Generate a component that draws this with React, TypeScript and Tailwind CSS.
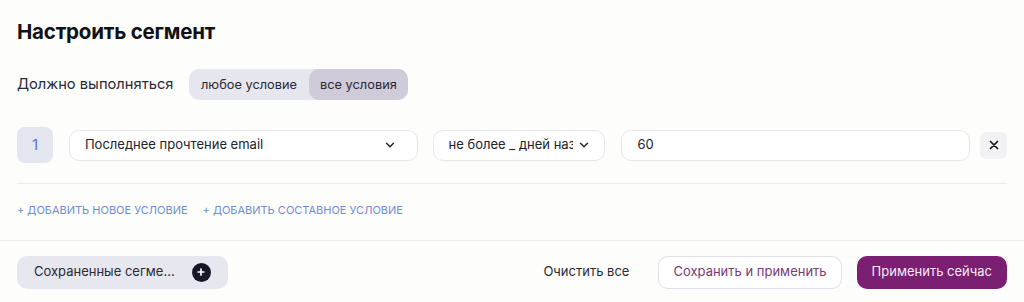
import React from "react";

function Chevron() {
  return (
    <svg width="14" height="14" viewBox="0 0 24 24" fill="none" stroke="#1f1f2a" strokeWidth="2.4" strokeLinecap="round" strokeLinejoin="round">
      <path d="M6 9l6 6 6-6" />
    </svg>
  );
}

export default function App() {
  return (
    <div className="w-[1024px] h-[302px] bg-[#fdfdfb] text-[#1c1c24] overflow-hidden" style={{ fontFamily: "Inter, 'Noto Sans', sans-serif" }}>
      <div className="px-[17px] pt-[19px]">
        <h1 className="text-[20.5px] leading-[26px] font-bold text-[#111117] tracking-[-0.2px]">Настроить сегмент</h1>
        <div className="flex items-center mt-[24px] h-[31px]">
          <span className="text-[14.7px] text-[#2a2a33] w-[172px]">Должно выполняться</span>
          <div className="flex h-[31px] rounded-[10px] bg-[#e6e6ef] text-[12.8px] text-[#2a2a33]">
            <button className="px-[12px] rounded-[10px]">любое условие</button>
            <button className="px-[11px] rounded-[10px] bg-[#cfcbd8]">все условия</button>
          </div>
        </div>
        <div className="flex items-center mt-[27px] h-[36px]">
          <div className="w-[36px] h-[36px] rounded-[8px] bg-[#e3e6ef] flex items-center justify-center text-[15px] text-[#5b78d4]">1</div>
          <div className="ml-[16px] w-[349px] h-[31px] rounded-[10px] border border-[#e6e6ec] bg-white flex items-center justify-between pl-[15px] pr-[20px] text-[13px] text-[#22222a]">
            <span>Последнее прочтение email</span>
            <Chevron />
          </div>
          <div className="ml-[15px] w-[173px] h-[31px] rounded-[10px] border border-[#e6e6ec] bg-white flex items-center justify-between pl-[15px] pr-[13px] text-[13px] text-[#22222a]">
            <span className="w-[124px] overflow-hidden whitespace-nowrap">не более _ дней назад</span>
            <Chevron />
          </div>
          <div className="ml-[16px] w-[349px] h-[31px] rounded-[10px] border border-[#e6e6ec] bg-white flex items-center pl-[15px] text-[13px] text-[#22222a]">60</div>
          <div className="ml-[10px] w-[27px] h-[27px] rounded-[6px] bg-[#f2f2f5] flex items-center justify-center">
            <svg width="12" height="12" viewBox="0 0 24 24" fill="none" stroke="#15151c" strokeWidth="3.4" strokeLinecap="round">
              <path d="M5 5l14 14M19 5L5 19" />
            </svg>
          </div>
        </div>
        <div className="mt-[20px] h-px bg-[#ececef] w-[990px]" />
        <div className="flex gap-[15px] mt-[18px] text-[11px] text-[#6d8cd9] uppercase">
          <span>+ Добавить новое условие</span>
          <span>+ Добавить составное условие</span>
        </div>
      </div>
      <div className="mt-[21px] h-px bg-[#ecebf2]" />
      <div className="flex items-center px-[17px] mt-[15px] h-[33px]">
        <div className="w-[211px] h-[33px] rounded-[10px] bg-[#e6e7ef] flex items-center pl-[17px] text-[13px] text-[#2a2a33]">
          <span>Сохраненные сегме...</span>
          <span className="ml-[17px] w-[19px] h-[19px] rounded-full bg-[#171727] flex items-center justify-center">
            <svg width="10" height="10" viewBox="0 0 24 24" fill="none" stroke="white" strokeWidth="4" strokeLinecap="round">
              <path d="M12 5v14M5 12h14" />
            </svg>
          </span>
        </div>
        <div className="flex-1" />
        <button className="text-[13px] text-[#2a2a33] mr-[29px]">Очистить все</button>
        <button className="h-[33px] px-[14px] rounded-[10px] border border-[#e2dde6] text-[13px] text-[#7a3a78] bg-white">Сохранить и применить</button>
        <button className="ml-[15px] h-[33px] px-[15px] rounded-[10px] bg-[#7a1f72] text-[13px] text-[#f6eef5]">Применить сейчас</button>
      </div>
    </div>
  );
}
